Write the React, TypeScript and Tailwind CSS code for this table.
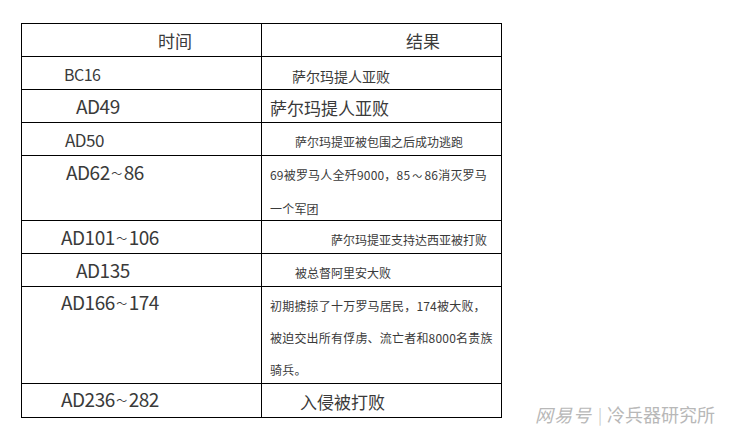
import React from "react";

type Row = {
  time: React.ReactNode;
  timeClass: string;
  result: React.ReactNode;
  resultClass: string;
  height: string;
};

// small wave dash as it shows in the source document
const Tilde = () => (
  <span className="relative top-[-2px] inline-block w-[14px] text-center text-[11px] tracking-normal">～</span>
);

const rows: Row[] = [
  {
    time: "BC16",
    timeClass: "pl-[42px] pt-[9px] text-[16px] tracking-[-0.5px]",
    result: "萨尔玛提人亚败",
    resultClass: "pl-[30px] pt-[12px] text-[14px]",
    height: "h-[33px]",
  },
  {
    time: "AD49",
    timeClass: "pl-[54px] pt-[6px] text-[19px] tracking-[-0.5px]",
    result: "萨尔玛提人亚败",
    resultClass: "pl-[8px] pt-[9px] text-[17px]",
    height: "h-[33px]",
  },
  {
    time: "AD50",
    timeClass: "pl-[43px] pt-[8px] text-[17px] tracking-[-0.5px]",
    result: "萨尔玛提亚被包围之后成功逃跑",
    resultClass: "pl-[33px] pt-[13px] text-[12px]",
    height: "h-[33px]",
  },
  {
    time: <>AD62<Tilde />86</>,
    timeClass: "pl-[44px] pt-[6px] text-[19px] tracking-[-0.5px]",
    result: (
      <div className="leading-[33px]">
        69被罗马人全歼9000，85<span className="text-[10px] px-[2px]">～</span>86消灭罗马
        <br />
        一个军团
      </div>
    ),
    resultClass: "pl-[8px] pt-[2px] text-[12px] tracking-[0.2px]",
    height: "h-[65px]",
  },
  {
    time: <>AD101<Tilde />106</>,
    timeClass: "pl-[39px] pt-[6px] text-[19px] tracking-[-0.5px]",
    result: "萨尔玛提亚支持达西亚被打败",
    resultClass: "pl-[69px] pt-[13px] text-[12px]",
    height: "h-[33px]",
  },
  {
    time: "AD135",
    timeClass: "pl-[54px] pt-[6px] text-[19px] tracking-[-0.5px]",
    result: "被总督阿里安大败",
    resultClass: "pl-[33px] pt-[13px] text-[12px]",
    height: "h-[33px]",
  },
  {
    time: <>AD166<Tilde />174</>,
    timeClass: "pl-[39px] pt-[5px] text-[19px] tracking-[-0.5px]",
    result: (
      <div className="leading-[32px]">
        初期掳掠了十万罗马居民，174被大败，
        <br />
        被迫交出所有俘虏、流亡者和8000名贵族
        <br />
        骑兵。
      </div>
    ),
    resultClass: "pl-[8px] pt-[3px] text-[12px] tracking-[0.2px]",
    height: "h-[97px]",
  },
  {
    time: <>AD236<Tilde />282</>,
    timeClass: "pl-[39px] pt-[5px] text-[19px] tracking-[-0.5px]",
    result: "入侵被打败",
    resultClass: "pl-[38px] pt-[9px] text-[17px]",
    height: "h-[33px]",
  },
];

export default function App() {
  return (
    <div className="relative w-[734px] h-[440px] overflow-hidden bg-white font-['Noto_Sans_CJK_SC',sans-serif] text-[#3a3a3a]">
      <div className="pt-[23px] pl-[21px]">
        <div className="w-[481px] border border-black">
          {/* header */}
          <div className="grid grid-cols-[240px_1fr] h-[33px] border-b border-black">
            <div className="border-r border-black pl-[136px] pt-[8px] text-[17px] leading-none whitespace-nowrap">
              时间
            </div>
            <div className="pl-[144px] pt-[8px] text-[17px] leading-none whitespace-nowrap">
              结果
            </div>
          </div>

          {rows.map((row, i) => (
            <div
              key={i}
              className={`grid grid-cols-[240px_1fr] ${row.height} ${
                i < rows.length - 1 ? "border-b border-black" : ""
              }`}
            >
              <div className={`border-r border-black leading-none whitespace-nowrap ${row.timeClass}`}>
                {row.time}
              </div>
              <div className={`leading-none whitespace-nowrap ${row.resultClass}`}>{row.result}</div>
            </div>
          ))}
        </div>
      </div>

      {/* watermark */}
      <div className="absolute left-[535px] top-[405px] flex items-center text-[18px] leading-none text-[#b8b8b8] whitespace-nowrap">
        <span className="italic tracking-[1px]">网易号</span>
        <span className="ml-[6px] mr-[5px] text-[16px] font-light">|</span>
        <span>冷兵器研究所</span>
      </div>
    </div>
  );
}
